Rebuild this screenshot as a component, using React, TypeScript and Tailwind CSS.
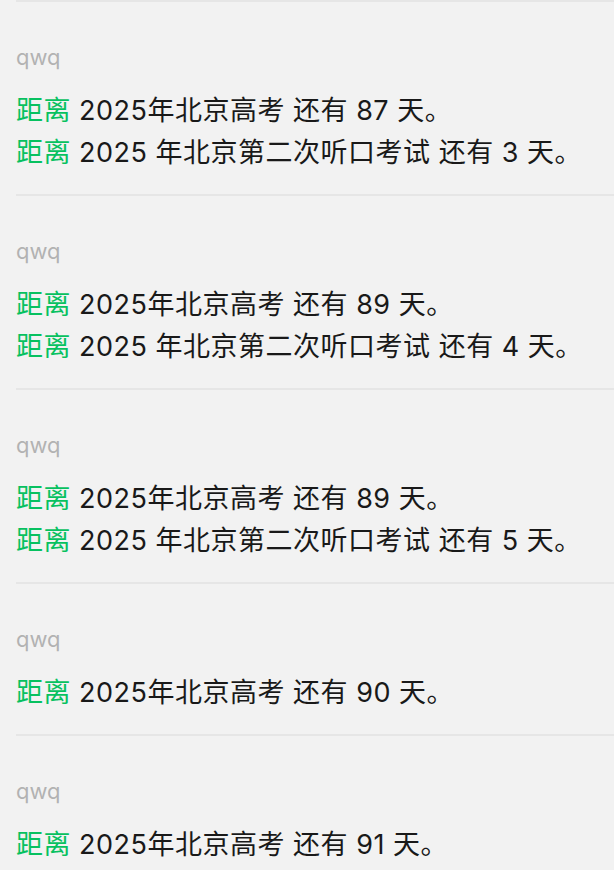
import React from "react";

interface Entry {
  title: string;
  lines: { text: string }[];
}

const entries: Entry[] = [
  {
    title: "qwq",
    lines: [
      { text: "2025年北京高考 还有 87 天。" },
      { text: "2025 年北京第二次听口考试 还有 3 天。" },
    ],
  },
  {
    title: "qwq",
    lines: [
      { text: "2025年北京高考 还有 89 天。" },
      { text: "2025 年北京第二次听口考试 还有 4 天。" },
    ],
  },
  {
    title: "qwq",
    lines: [
      { text: "2025年北京高考 还有 89 天。" },
      { text: "2025 年北京第二次听口考试 还有 5 天。" },
    ],
  },
  {
    title: "qwq",
    lines: [{ text: "2025年北京高考 还有 90 天。" }],
  },
  {
    title: "qwq",
    lines: [{ text: "2025年北京高考 还有 91 天。" }],
  },
];

const Message: React.FC<{ entry: Entry }> = ({ entry }) => {
  return (
    <div className="ml-4 border-t-2 border-[#e6e6e6] pt-[41px] pb-5">
      <div className="text-[22px] leading-[28px] text-[#b2b2b2]">{entry.title}</div>
      <div className="mt-[19px] text-[27px] leading-[42px] tracking-[0.5px] text-[#191919]">
        {entry.lines.map((line, i) => (
          <div key={i} className="whitespace-nowrap">
            <span className="text-[#07c160]">距离</span> {line.text}
          </div>
        ))}
      </div>
    </div>
  );
};

export default function App() {
  return (
    <div
      className="min-h-screen bg-[#f2f2f2]"
      style={{ fontFamily: '"Inter", "Noto Sans CJK SC", sans-serif' }}
    >
      {entries.map((entry, i) => (
        <Message key={i} entry={entry} />
      ))}
    </div>
  );
}
